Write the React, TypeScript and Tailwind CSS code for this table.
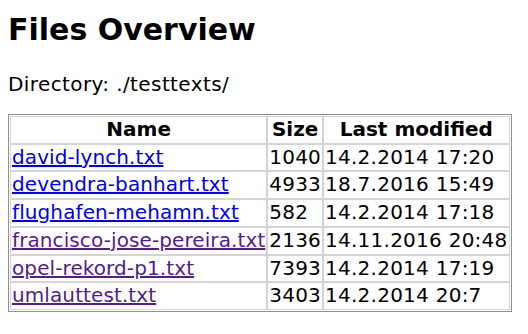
import React from 'react'

type FileRow = {
    name: string;
    size: number;
    modified: string;
    visited: boolean;
}

const files: FileRow[] = [
    { name: "david-lynch.txt", size: 1040, modified: "14.2.2014 17:20", visited: false },
    { name: "devendra-banhart.txt", size: 4933, modified: "18.7.2016 15:49", visited: false },
    { name: "flughafen-mehamn.txt", size: 582, modified: "14.2.2014 17:18", visited: false },
    { name: "francisco-jose-pereira.txt", size: 2136, modified: "14.11.2016 20:48", visited: true },
    { name: "opel-rekord-p1.txt", size: 7393, modified: "14.2.2014 17:19", visited: true },
    { name: "umlauttest.txt", size: 3403, modified: "14.2.2014 20:7", visited: true },
]

const App = () => {
    return (
        <div className="min-h-[334px] bg-white px-2 pt-3 font-['DejaVu_Sans',sans-serif] text-black">
            <h1 className="text-[30px] font-bold leading-[35px]">Files Overview</h1>
            <p className="mt-[26px] text-[20px] leading-[23px] tracking-[0.4px]">Directory: ./testtexts/</p>
            <table className="mt-[18px] border-separate border-spacing-0 border border-[#8f8f8f] p-px text-[20px] leading-[25.7px]">
                <thead>
                    <tr>
                        <th className="border border-[#d4d4d4] px-px text-center font-bold">Name</th>
                        <th className="border border-[#d4d4d4] px-px text-center font-bold">Size</th>
                        <th className="border border-[#d4d4d4] px-px text-center font-bold">Last modified</th>
                    </tr>
                </thead>
                <tbody>
                    {files.map((f) => (
                        <tr key={f.name}>
                            <td className="border border-[#d4d4d4] px-px tracking-[0.1px]">
                                <a
                                    href="#"
                                    className={f.visited ? "text-[#551a8b] underline" : "text-[#0000ee] underline"}
                                >
                                    {f.name}
                                </a>
                            </td>
                            <td className="border border-[#d4d4d4] px-px tracking-[0.2px]">{f.size}</td>
                            <td className="border border-[#d4d4d4] px-px tracking-[0.25px]">{f.modified}</td>
                        </tr>
                    ))}
                </tbody>
            </table>
        </div>
    )
}

export default App
